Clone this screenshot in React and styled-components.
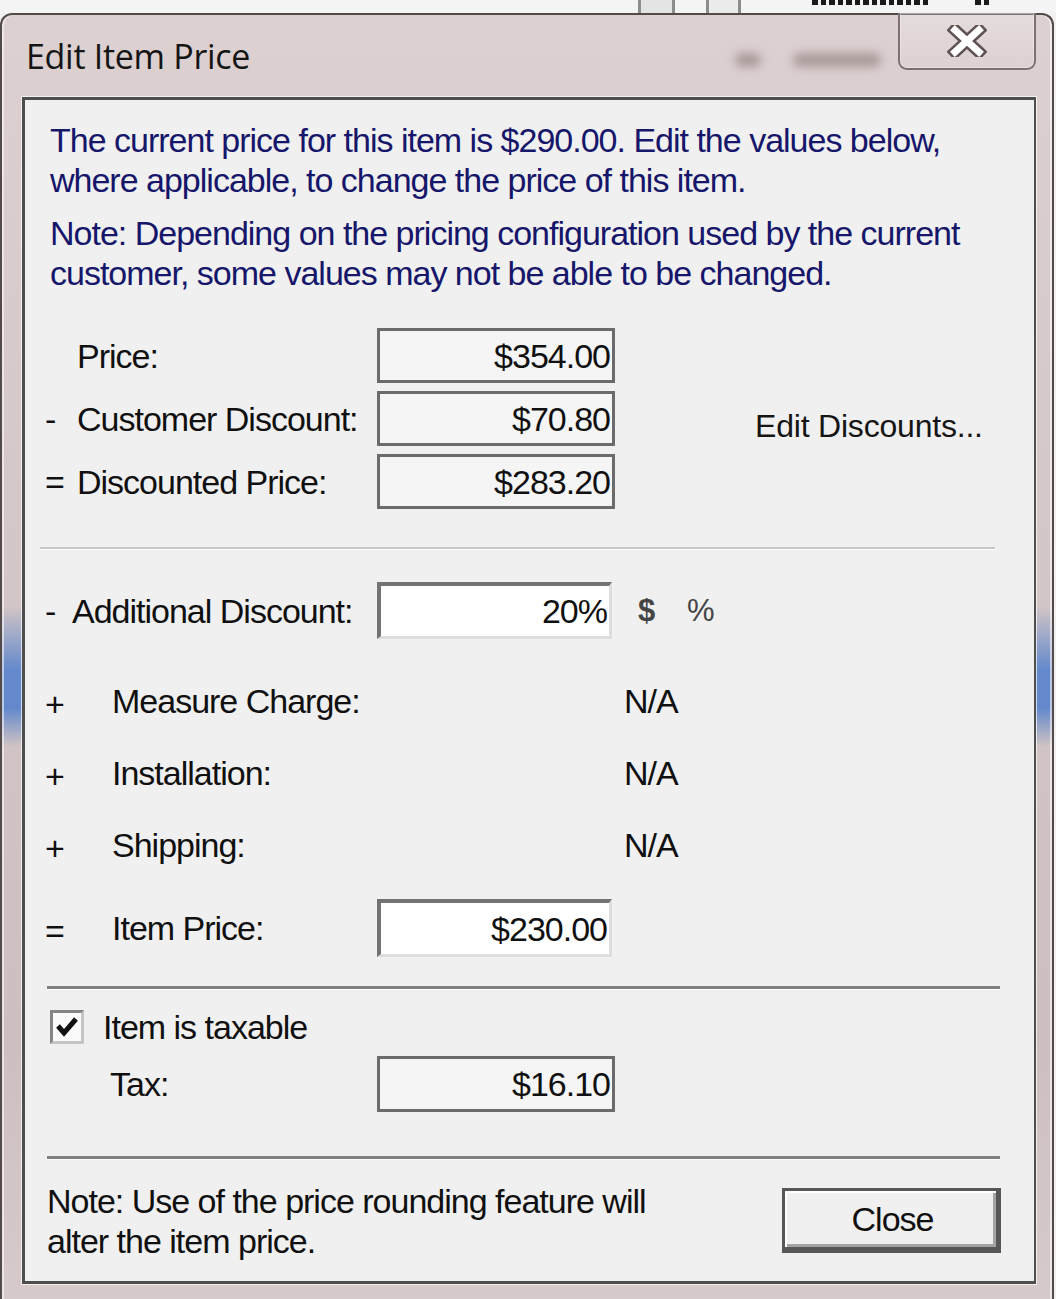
import React from 'react';
import styled, { createGlobalStyle } from 'styled-components';

const GlobalStyle = createGlobalStyle`
  html, body {
    margin: 0;
    padding: 0;
    background: #f1f1f1;
  }
  body {
    font-family: "Liberation Sans", Arial, sans-serif;
  }
`;

// Page + the window that peeks out behind the dialog
const Page = styled.div`
  width: 1056px;
  height: 1299px;
  overflow: hidden;
  display: flex;
  flex-direction: column;
  background: #f1f1f1;
`;

const Backdrop = styled.div`
  height: 13px;
  flex: none;
  display: flex;
  align-items: flex-start;
  overflow: hidden;
  background: #f4f4f4;
  padding-left: 638px;
`;

const BackdropCell = styled.div`
  width: ${p => p.$w}px;
  height: 13px;
  box-sizing: border-box;
  border-left: 3px solid #8c8c8c;
  background: ${p => p.$fill || 'transparent'};
`;

// unreadable glyph bottoms of the window behind
const BackdropInk = styled.div`
  width: ${p => p.$w}px;
  height: 5px;
  margin-left: ${p => p.$ml}px;
  background: repeating-linear-gradient(to right, #1a1a1a 0 6px, transparent 6px 9px, #1a1a1a 9px 14px, transparent 14px 17px);
`;

// Window frame
const Frame = styled.div`
  flex: 1;
  width: 1054px;
  box-sizing: border-box;
  display: flex;
  flex-direction: column;
  border: 2px solid #554a4a;
  border-bottom: none;
  border-radius: 12px 12px 0 0;
  padding: 0 16px 15px 20px;
  box-shadow: inset 2px 0 0 rgba(255, 255, 255, 0.55), inset -2px 0 0 rgba(255, 255, 255, 0.55);
  background:
    linear-gradient(to bottom, transparent 0, transparent 46%, rgba(72, 122, 205, 0.8) 51%, rgba(72, 122, 205, 0.8) 54%, transparent 57%),
    linear-gradient(to bottom, #dcd0d0, #d4c7c7 40%, #cdbfbf 80%, #d6caca);
`;

const TitleBar = styled.div`
  height: 82px;
  flex: none;
  display: flex;
  align-items: flex-start;
`;

const Title = styled.h1`
  margin: 0;
  padding: 21px 0 0 4px;
  font: 400 34px "Open Sans", "Noto Sans", sans-serif;
  line-height: 40px;
  color: #141414;
  letter-spacing: -0.3px;
`;

const Ghost = styled.div`
  margin: 38px 0 0 auto;
  display: flex;
  gap: 32px;
  filter: blur(5px);
`;

const GhostBlob = styled.span`
  width: ${p => p.$w}px;
  height: 14px;
  border-radius: 7px;
  background: rgba(95, 75, 75, 0.4);
`;

const CloseBox = styled.div`
  width: 138px;
  height: 57px;
  box-sizing: border-box;
  margin: -2px 0 0 17px;
  border: 2px solid #7d7070;
  border-top: none;
  border-radius: 0 0 9px 9px;
  background: linear-gradient(to bottom, rgba(255, 255, 255, 0.25), rgba(255, 255, 255, 0.05));
  box-shadow: inset 0 0 0 1px rgba(255, 255, 255, 0.35);
  display: flex;
  align-items: center;
  justify-content: center;
`;

// Dialog client area
const Client = styled.div`
  flex: 1;
  box-sizing: border-box;
  border: 3px solid #4e4e4e;
  border-right-width: 2px;
  background: #f0f0f0;
  padding-top: 20px;
  display: flex;
  flex-direction: column;
  box-shadow: 0 0 0 1px rgba(255, 255, 255, 0.7);
  font-size: 34px;
  letter-spacing: -1px;
  line-height: 40px;
  color: #101010;
`;

const Intro = styled.p`
  margin: ${p => (p.$first ? '0' : '13px')} 0 0 25px;
  color: #16166a;
`;

const TopList = styled.div`
  margin: 35px 0 0 20px;
  display: flex;
  flex-direction: column;
  gap: 8px;
`;

const TopRow = styled.div`
  height: 55px;
  display: grid;
  grid-template-columns: 32px 300px 238px 140px auto;
  align-items: center;
`;

const Sign = styled.span`
  white-space: pre;
`;

const Label = styled.span`
  white-space: nowrap;
`;

const Field = styled.div`
  height: 100%;
  box-sizing: border-box;
  padding-right: 2px;
  white-space: nowrap;
  display: flex;
  align-items: center;
  justify-content: flex-end;
  ${p =>
    p.$editable
      ? `
    background: #ffffff;
    border-top: 4px solid #737373;
    border-left: 4px solid #737373;
    border-right: 3px solid #dedede;
    border-bottom: 3px solid #dedede;
  `
      : `
    background: #f5f5f5;
    border: 3px solid #6b6b6b;
  `}
`;

const LinkText = styled.span`
  grid-column: 5;
  padding-top: 14px;
  font-size: 32px;
  letter-spacing: -0.2px;
  white-space: nowrap;
  color: #151515;
`;

const Separator = styled.div`
  margin: ${p => p.$mt}px 0 0 ${p => p.$ml}px;
  width: ${p => p.$w}px;
  height: ${p => p.$h}px;
  background: ${p => p.$color};
  box-shadow: 0 1px 0 #ffffff;
`;

const AddRow = styled.div`
  margin: 33px 0 0 20px;
  height: 57px;
  display: grid;
  grid-template-columns: 27px 305px 235px 26px 49px auto;
  align-items: center;
`;

const Unit = styled.span`
  font-size: 31px;
  font-weight: ${p => (p.$bold ? 700 : 400)};
  color: #454545;
  letter-spacing: 0;
  grid-column: ${p => p.$col};
`;

const ChargeList = styled.div`
  margin: 26px 0 0 20px;
  display: grid;
  grid-template-columns: 67px 512px auto;
  grid-auto-rows: 72px;
  align-items: center;
`;

const PlusSign = styled.span`
  padding-top: 6px;
`;

const TotalRow = styled.div`
  margin: 18px 0 0 20px;
  height: 58px;
  display: grid;
  grid-template-columns: 67px 265px 235px;
  align-items: center;
`;

const CheckRow = styled.label`
  margin: 20px 0 0 25px;
  height: 35px;
  display: flex;
  align-items: center;
  gap: 19px;
`;

const CheckBox = styled.span`
  width: 34px;
  height: 34px;
  box-sizing: border-box;
  border: 3px solid #858585;
  border-right-color: #c4c4c4;
  border-bottom-color: #c4c4c4;
  background: #fbfbfb;
  display: flex;
  align-items: center;
  justify-content: center;
`;

const TaxRow = styled.div`
  margin: 12px 0 0 85px;
  height: 56px;
  display: grid;
  grid-template-columns: 267px 238px;
  align-items: center;
`;

const Footer = styled.div`
  margin: 22px 33px 0 22px;
  display: flex;
  justify-content: space-between;
  align-items: flex-start;
`;

const Note = styled.p`
  margin: 0;
`;

const CloseButton = styled.button`
  width: 219px;
  height: 65px;
  margin-top: 7px;
  box-sizing: border-box;
  border: 3px solid #575757;
  border-right-width: 5px;
  border-bottom-width: 6px;
  background: #f0f0f0;
  box-shadow: inset 2px 2px 0 #ffffff, inset -3px -3px 0 #a3a3a3;
  font: inherit;
  font-size: 34px;
  letter-spacing: -1px;
  color: #101010;
  padding: 0 0 0 4px;
`;

const topRows = [
  { sign: '', label: 'Price:', value: '$354.00' },
  { sign: '-', label: 'Customer Discount:', value: '$70.80', link: 'Edit Discounts...' },
  { sign: '=', label: 'Discounted Price:', value: '$283.20' },
];

const charges = ['Measure Charge:', 'Installation:', 'Shipping:'];

const CloseGlyph = () => (
  <svg width="40" height="32" viewBox="0 0 40 32">
    <path d="M8 5 L32 27 M32 5 L8 27" stroke="#5e5252" strokeWidth="12" strokeLinecap="square" fill="none" />
    <path d="M8 5 L32 27 M32 5 L8 27" stroke="#ffffff" strokeWidth="7" strokeLinecap="square" fill="none" />
  </svg>
);

const CheckMark = () => (
  <svg width="24" height="22" viewBox="0 0 24 22">
    <path d="M3 10 L9 17 L21 3" stroke="#111" strokeWidth="5" fill="none" />
  </svg>
);

const App = () => (
  <>
    <GlobalStyle />
    <Page>
      <Backdrop aria-hidden="true">
        <BackdropCell $w={34} $fill="#e4e4e4" />
        <BackdropCell $w={34} />
        <BackdropCell $w={32} $fill="#ececec" />
        <BackdropCell $w={8} />
        <BackdropInk $w={118} $ml={66} />
        <BackdropInk $w={15} $ml={45} />
      </Backdrop>
      <Frame>
        <TitleBar>
          <Title>Edit Item Price</Title>
          <Ghost aria-hidden="true">
            <GhostBlob $w={26} />
            <GhostBlob $w={88} />
          </Ghost>
          <CloseBox>
            <CloseGlyph />
          </CloseBox>
        </TitleBar>
        <Client>
          <Intro $first>
            The current price for this item is $290.00. Edit the values below,
            <br />
            where applicable, to change the price of this item.
          </Intro>
          <Intro>
            Note: Depending on the pricing configuration used by the current
            <br />
            customer, some values may not be able to be changed.
          </Intro>

          <TopList>
            {topRows.map(row => (
              <TopRow key={row.label}>
                <Sign>{row.sign}</Sign>
                <Label>{row.label}</Label>
                <Field>{row.value}</Field>
                {row.link && <LinkText>{row.link}</LinkText>}
              </TopRow>
            ))}
          </TopList>

          <Separator $mt={38} $ml={15} $w={955} $h={2} $color="#c6c6c6" />

          <AddRow>
            <Sign>-</Sign>
            <Label>Additional Discount:</Label>
            <Field $editable>20%</Field>
            <Unit $col={5} $bold>$</Unit>
            <Unit $col={6}>%</Unit>
          </AddRow>

          <ChargeList>
            {charges.map(c => (
              <React.Fragment key={c}>
                <PlusSign>+</PlusSign>
                <Label>{c}</Label>
                <span>N/A</span>
              </React.Fragment>
            ))}
          </ChargeList>

          <TotalRow>
            <PlusSign>=</PlusSign>
            <Label>Item Price:</Label>
            <Field $editable>$230.00</Field>
          </TotalRow>

          <Separator $mt={29} $ml={22} $w={953} $h={3} $color="#808080" />

          <CheckRow>
            <CheckBox>
              <CheckMark />
            </CheckBox>
            <span>Item is taxable</span>
          </CheckRow>

          <TaxRow>
            <Label>Tax:</Label>
            <Field>$16.10</Field>
          </TaxRow>

          <Separator $mt={44} $ml={22} $w={953} $h={3} $color="#808080" />

          <Footer>
            <Note>
              Note: Use of the price rounding feature will
              <br />
              alter the item price.
            </Note>
            <CloseButton>Close</CloseButton>
          </Footer>
        </Client>
      </Frame>
    </Page>
  </>
);

export default App;
